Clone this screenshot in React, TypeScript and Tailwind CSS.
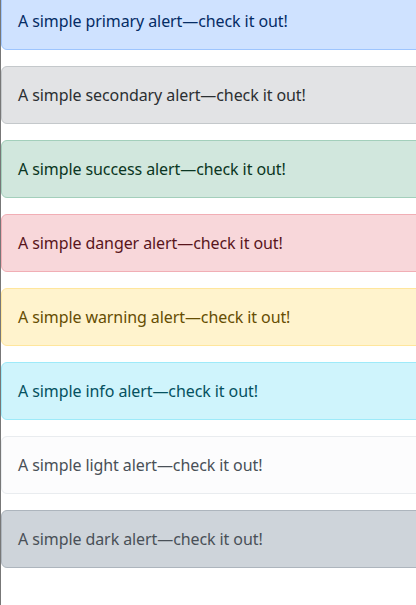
const alerts = [
  { name: "primary", cls: "bg-[#cfe2ff] border-[#9ec5fe] text-[#052c65]" },
  { name: "secondary", cls: "bg-[#e2e3e5] border-[#c4c8cb] text-[#2b2f32]" },
  { name: "success", cls: "bg-[#d1e7dd] border-[#a3cfbb] text-[#0a3622]" },
  { name: "danger", cls: "bg-[#f8d7da] border-[#f1aeb5] text-[#58151c]" },
  { name: "warning", cls: "bg-[#fff3cd] border-[#ffe69c] text-[#664d03]" },
  { name: "info", cls: "bg-[#cff4fc] border-[#9eeaf9] text-[#055160]" },
  { name: "light", cls: "bg-[#fcfcfd] border-[#e9ecef] text-[#495057]" },
  { name: "dark", cls: "bg-[#ced4da] border-[#adb5bd] text-[#495057]" },
];

export default function App() {
  return (
    <div className="h-[605px] w-[416px] overflow-hidden bg-white border-l border-[#777777]" style={{ fontFamily: '"Noto Sans", "Noto Sans CJK KR", sans-serif' }}>
      <div className="-mt-[8px] w-[500px] flex flex-col gap-4">
        {alerts.map((a) => (
          <div key={a.name} className={`border rounded-md p-4 text-base leading-6 tracking-[-0.09px] ${a.cls}`}>
            A simple {a.name} alert—check it out!
          </div>
        ))}
      </div>
    </div>
  );
}
